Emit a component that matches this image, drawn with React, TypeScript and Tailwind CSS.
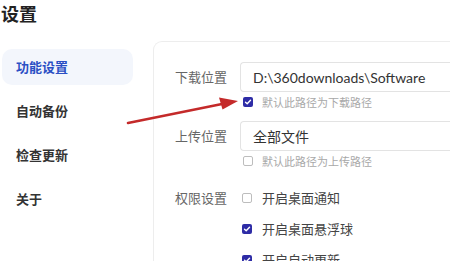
import React from "react";

const CJK = { fontFamily: '"Noto Sans CJK SC", "Noto Sans", sans-serif' };
const LATIN = { fontFamily: 'Lato, "Noto Sans CJK SC", sans-serif' };

function Box({ checked }: { checked: boolean }) {
  if (checked) {
    return (
      <span className="flex h-[10px] w-[10px] shrink-0 items-center justify-center rounded-[2px] bg-[#2e2ca6]">
        <svg width="8" height="8" viewBox="0 0 8 8">
          <path d="M1.5 4.2 L3.2 5.8 L6.5 2.2" fill="none" stroke="#fff" strokeWidth="1.4" strokeLinecap="round" strokeLinejoin="round" />
        </svg>
      </span>
    );
  }
  return <span className="h-[10px] w-[10px] shrink-0 rounded-[2px] border border-[#bdbdbd] bg-white" />;
}

function SubCheck({ checked, text }: { checked: boolean; text: string }) {
  return (
    <div className="flex h-[20px] items-center gap-[9px] pl-[3px]">
      <Box checked={checked} />
      <span className="text-[11px] leading-none text-[#a8a8a8]">{text}</span>
    </div>
  );
}

function PermRow({ checked, text }: { checked: boolean; text: string }) {
  return (
    <div className="flex h-[31px] items-center gap-[10px] pl-[2px]">
      <Box checked={checked} />
      <span className="text-[13px] leading-none text-[#444]">{text}</span>
    </div>
  );
}

export default function App() {
  const items = ["功能设置", "自动备份", "检查更新", "关于"];
  return (
    <div className="relative h-[261px] w-[450px] overflow-hidden bg-white" style={CJK}>
      <div className="flex h-[41px] items-start pl-[1px] pt-[1px]">
        <span className="text-[18px] font-bold leading-[24px] text-[#222]">设置</span>
      </div>
      <div className="flex">
        <div className="flex w-[153px] shrink-0 flex-col gap-[8px] pl-[2px] pt-[8px]">
          {items.map((t, i) => (
            <div
              key={t}
              className={
                i === 0
                  ? "flex h-[36px] w-[131px] items-center rounded-[10px] bg-[#f3f6fc] pl-[14px] text-[13px] font-bold text-[#2b4fc4]"
                  : "flex h-[36px] w-[131px] items-center pl-[14px] text-[13px] font-semibold text-[#333]"
              }
            >
              {t}
            </div>
          ))}
        </div>
        <div className="h-[240px] flex-1 rounded-tl-[9px] border-l border-t border-[#ededed] pl-[21px] pt-[20px]">
          <div className="flex">
            <div className="flex h-[30px] w-[65px] shrink-0 items-center text-[13px] text-[#666]">下载位置</div>
            <div className="flex-1">
              <div className="flex h-[30px] items-center rounded-l-[4px] border border-r-0 border-[#e3e3e3] pl-[12px] text-[14px] text-[#333]" style={LATIN}>
                D:\360downloads\Software
              </div>
              <SubCheck checked text="默认此路径为下载路径" />
            </div>
          </div>
          <div className="mt-[9px] flex">
            <div className="flex h-[30px] w-[65px] shrink-0 items-center text-[13px] text-[#666]">上传位置</div>
            <div className="flex-1">
              <div className="flex h-[30px] items-center rounded-l-[4px] border border-r-0 border-[#e3e3e3] pl-[12px] text-[14px] text-[#333]">
                全部文件
              </div>
              <SubCheck checked={false} text="默认此路径为上传路径" />
            </div>
          </div>
          <div className="mt-[11px] flex">
            <div className="flex h-[31px] w-[65px] shrink-0 items-center text-[13px] text-[#666]">权限设置</div>
            <div className="flex-1">
              <PermRow checked={false} text="开启桌面通知" />
              <PermRow checked text="开启桌面悬浮球" />
              <PermRow checked text="开启自动更新" />
            </div>
          </div>
        </div>
      </div>
      <svg className="pointer-events-none absolute left-0 top-0" width="450" height="261" viewBox="0 0 450 261">
        <line x1="128" y1="123" x2="222" y2="104" stroke="#c42a2a" strokeWidth="2.6" strokeLinecap="round" />
        <polygon points="238,101 219,97.5 222.5,109.5" fill="#c42a2a" />
      </svg>
    </div>
  );
}
